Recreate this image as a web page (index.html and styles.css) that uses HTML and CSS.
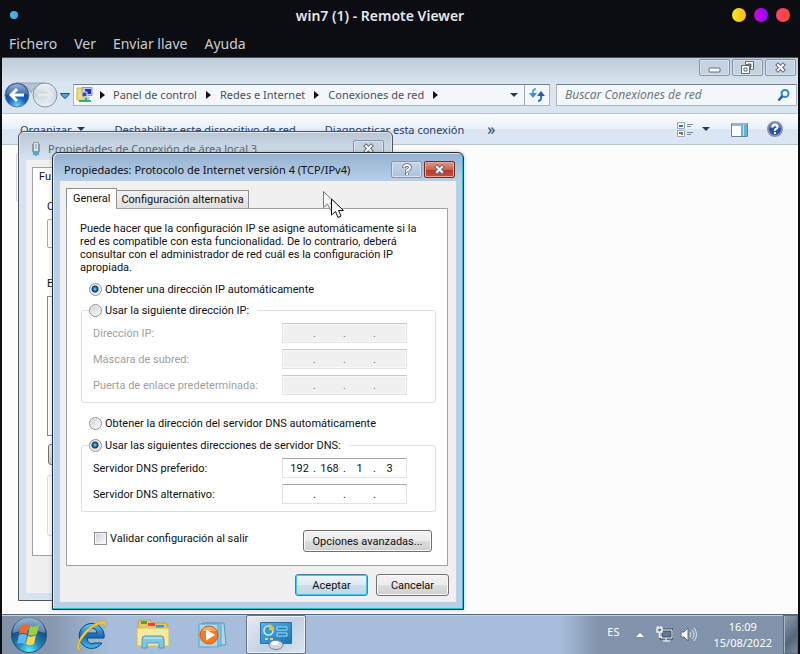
FILE: index.html
```html
<!DOCTYPE html>
<html lang="es">
<head>
<meta charset="utf-8">
<title>win7 (1) - Remote Viewer</title>
<link rel="stylesheet" href="styles.css">
</head>
<body>
<header class="viewer-title">
  <span class="dot dot-blue"></span>
  <h1>win7 (1) - Remote Viewer</h1>
  <div class="viewer-controls">
    <button class="dot dot-yellow" aria-label="Minimizar"></button>
    <button class="dot dot-purple" aria-label="Maximizar"></button>
    <button class="dot dot-red" aria-label="Cerrar"></button>
  </div>
</header>
<nav class="viewer-menu">
  <button>Fichero</button><button>Ver</button><button>Enviar llave</button><button>Ayuda</button>
</nav>

<main class="desktop">
  <section class="explorer">
    <div class="caption">
      <button aria-label="Minimizar"><svg width="13" height="13" viewBox="0 0 13 13"><rect x="1" y="7" width="11" height="4" rx="1" fill="#fff" stroke="#666b78"/></svg></button>
      <button aria-label="Restaurar"><svg width="13" height="13" viewBox="0 0 13 13" fill="none" stroke="#666b78"><path d="M4.500 .5h8v8h-3v-5h-5z" fill="#fff"/><path d="M.5 4.500h8v8h-8z" fill="#fff"/><path d="M3 7h3v3H3zM7 3h3v3"/></svg></button>
      <button aria-label="Cerrar"><svg width="13" height="13" viewBox="0 0 13 13"><path class="x-outline" d="M4 4l5 5M9 4l-5 5"/><path class="x-fill" d="M4 4l5 5M9 4l-5 5"/></svg></button>
    </div>
    <div class="address-row">
      <button class="plain nav-buttons" aria-label="Atrás y adelante">
        <svg width="66" height="28" viewBox="0 0 66 28">
          <defs>
            <radialGradient id="back" cx=".5" cy=".95" r=".8"><stop offset="0" stop-color="#6bdcff"/><stop offset=".45" stop-color="#1764bd"/><stop offset="1" stop-color="#163a83"/></radialGradient>
            <linearGradient id="backTop" x2="0" y2="1"><stop stop-color="#c6d9f2"/><stop offset="1" stop-color="#3c70bb"/></linearGradient>
            <linearGradient id="fwd" x2="0" y2="1"><stop stop-color="#eff3f7"/><stop offset=".5" stop-color="#cbd5df"/><stop offset="1" stop-color="#edf3f8"/></linearGradient>
          </defs>
          <path d="M13 2h28q-12 3-14 10Q25 4 13 2z" fill="#b6c3d0" stroke="#95a4b5"/>
          <circle cx="13" cy="14" r="12" fill="url(#back)" stroke="#62799a"/>
          <path d="M2 14a11 11 0 0 1 22 0Q13 10 2 14z" fill="url(#backTop)" opacity=".75"/>
          <path d="M13 8l-6 6 6 6M8 14h12" fill="none" stroke="#fff" stroke-width="3"/>
          <circle cx="41" cy="14" r="12" fill="url(#fwd)" stroke="#8492a3"/>
          <path d="M42 8l6 6-6 6M34 14h12" fill="none" stroke="#e4eaf0" stroke-width="3"/>
          <path d="M56.500 12.500h9l-2 3-2.500 2-2.500-2z" fill="#4aa8d8" stroke="#264d82"/>
        </svg>
      </button>
      <div class="address">
        <svg width="18" height="18" viewBox="0 0 18 18"><path d="M1 2h7v12H1z" fill="#f4dd75" stroke="#d2b64c"/><path d="M6 1.500h10v8H6z" fill="#c2cbe1" stroke="#8a96b5"/><path d="M9 3h6v5H9z" fill="#1a35bd"/><path d="M6 6h5v5H6z" fill="#2848cd" stroke="#dae2f4"/><path d="M8 10l6 1-1 3H7z" fill="#c0c8d8"/><path d="M9 12v2H3v2h12v-2h-4v-2z" fill="#2bb574"/></svg>
        <i class="crumb-arrow"></i><a href="#">Panel de control</a>
        <i class="crumb-arrow"></i><a href="#">Redes e Internet</a>
        <i class="crumb-arrow"></i><a href="#">Conexiones de red</a>
        <i class="crumb-arrow"></i>
        <button class="plain drop" aria-label="Historial"><i class="down"></i></button>
        <button class="plain refresh" aria-label="Actualizar"><svg width="16" height="16" viewBox="0 0 16 16" fill="none" stroke="#2d72bf" stroke-width="2"><path d="M7 2Q3 2 4 8" stroke="#4fa8df"/><path d="M0 6h8l-4 5z" fill="#3c94d6" stroke="none"/><path d="M9 14q4 0 3-6"/><path d="M8 9h8l-4-5z" fill="#245fae" stroke="none"/></svg></button>
      </div>
      <label class="search">
        <input type="search" placeholder="Buscar Conexiones de red" aria-label="Buscar">
        <svg width="14" height="14" viewBox="0 0 14 14" fill="none"><circle cx="8" cy="5.500" r="3.500" stroke="#3284cd" stroke-width="2"/><path d="M5.500 8L1.500 12.500" stroke="#2857a0" stroke-width="2.500"/></svg>
      </label>
    </div>
    <div class="toolbar">
      <button class="plain">Organizar <i class="down"></i></button>
      <button class="plain">Deshabilitar este dispositivo de red</button>
      <button class="plain">Diagnosticar esta conexión</button>
      <button class="plain more">»</button>
      <span class="spacer"></span>
      <button class="plain view" aria-label="Cambiar vista"><svg width="17" height="17" viewBox="0 0 17 17"><path d="M1.500 1.500h7v6h-7zM1.500 9.500h7v6h-7z" fill="#fff" stroke="#94a8bb"/><path d="M3 4h4v2H3z" fill="#2b7b99"/><path d="M3 11h2v2H3z" fill="#d4463c"/><path d="M5 11h2v3H5z" fill="#45a34b"/><path d="M11 3.500h6M11 5.500h4M11 11.500h6M11 13.500h4" stroke="#7c8c9e"/></svg><i class="down"></i></button>
      <button class="plain pane" aria-label="Panel de vista previa"><svg width="17" height="15" viewBox="0 0 17 15"><path d="M.5 1.500h16v13H.5z" fill="#fff" stroke="#65819b"/><path d="M1 1h15v3H1z" fill="#9bb4c8"/><path d="M10 3h6v11h-6z" fill="#67b3d1"/><path d="M12 3h1v11h-1z" fill="#b9e3f1"/></svg></button>
      <button class="plain help" aria-label="Ayuda"><svg width="16" height="16" viewBox="0 0 16 16"><circle cx="8" cy="8" r="7" fill="#2b4fae" stroke="#8b93a3" stroke-width="2"/><path d="M3 7a5 5 0 0 1 10 0q-5-2-10 0" fill="#6e91df"/><path d="M5.500 6.500q0-3 2.500-3t2.500 2.500q0 1.500-1.500 2T8 10M8 11v2" fill="none" stroke="#fff" stroke-width="2"/></svg></button>
    </div>
    <div class="files"><div class="file-tile"></div></div>
  </section>

  <section class="window back-window">
    <div class="window-title">
      <svg width="10" height="16" viewBox="0 0 10 16"><path d="M2.500 1.500h5v9h-5z" fill="#dbe3ec" stroke="#8c99a8"/><path d="M5 3v5" stroke="#8c99a8"/><path d="M1.500 3v8h7V3" fill="none" stroke="#8c99a8"/><path d="M3 11v3M5 11v4M7 11v3" fill="none" stroke="#319cc1" stroke-width="1.500"/></svg>
      <h2>Propiedades de Conexión de área local 3</h2>
      <button aria-label="Cerrar"><svg width="13" height="13" viewBox="0 0 13 13"><path class="x-outline" d="M4 4l5 5M9 4l-5 5"/><path class="x-fill" d="M4 4l5 5M9 4l-5 5"/></svg></button>
    </div>
    <div class="client">
      <div class="back-page">
        <p class="back-tab">Fu</p>
        <p class="back-label">C</p>
        <div class="back-box"></div>
        <p class="back-label second">E</p>
        <div class="back-list"></div>
        <button class="back-button" aria-label="Instalar"></button>
        <div class="back-group"></div>
      </div>
    </div>
  </section>

  <section class="window front-window">
    <div class="window-title">
      <h2>Propiedades: Protocolo de Internet versión 4 (TCP/IPv4)</h2>
      <button class="help-button" aria-label="Ayuda"><svg width="12" height="13" viewBox="0 0 12 13" fill="none"><path d="M3 5q0-3 3-3t3 2.500q0 1.500-2 2.500T6 9M6 10v2" stroke="#5d6675" stroke-width="3.500"/><path d="M3 4.500q0-2.500 3-2.500t3 2.500q0 1.500-2 2.500T6 8.500M6 10v2" stroke="#fff" stroke-width="2"/></svg></button>
      <button class="close-button" aria-label="Cerrar"><svg width="13" height="13" viewBox="0 0 13 13"><path class="x-outline" d="M4 4l5 5M9 4l-5 5"/><path class="x-fill" d="M4 4l5 5M9 4l-5 5"/></svg></button>
    </div>
    <form class="client">
      <div class="tabs"><button type="button" class="tab active">General</button><button type="button" class="tab">Configuración alternativa</button></div>
      <div class="page">
        <p class="intro">Puede hacer que la configuración IP se asigne automáticamente si la<br>red es compatible con esta funcionalidad. De lo contrario, deberá<br>consultar con el administrador de red cuál es la configuración IP<br>apropiada.</p>
        <label class="choice loose"><input type="radio" name="ip" checked>Obtener una dirección IP automáticamente</label>
        <fieldset>
          <legend><label class="choice"><input type="radio" name="ip">Usar la siguiente dirección IP:</label></legend>
          <div class="field disabled"><label for="ip1">Dirección IP:</label><div class="ip"><input id="ip1" disabled>.<input disabled aria-label="Octeto 2">.<input disabled aria-label="Octeto 3">.<input disabled aria-label="Octeto 4"></div></div>
          <div class="field disabled"><label for="mask1">Máscara de subred:</label><div class="ip"><input id="mask1" disabled>.<input disabled aria-label="Octeto 2">.<input disabled aria-label="Octeto 3">.<input disabled aria-label="Octeto 4"></div></div>
          <div class="field disabled"><label for="gate1">Puerta de enlace predeterminada:</label><div class="ip"><input id="gate1" disabled>.<input disabled aria-label="Octeto 2">.<input disabled aria-label="Octeto 3">.<input disabled aria-label="Octeto 4"></div></div>
        </fieldset>
        <label class="choice loose dns"><input type="radio" name="dns" disabled>Obtener la dirección del servidor DNS automáticamente</label>
        <fieldset>
          <legend><label class="choice"><input type="radio" name="dns" checked>Usar las siguientes direcciones de servidor DNS:</label></legend>
          <div class="field"><label for="dns1">Servidor DNS preferido:</label><div class="ip"><input id="dns1" value="192">.<input value="168" aria-label="Octeto 2">.<input value="1" aria-label="Octeto 3">.<input value="3" aria-label="Octeto 4"></div></div>
          <div class="field"><label for="dns2">Servidor DNS alternativo:</label><div class="ip"><input id="dns2">.<input aria-label="Octeto 2">.<input aria-label="Octeto 3">.<input aria-label="Octeto 4"></div></div>
        </fieldset>
        <div class="page-end">
          <label class="choice"><input type="checkbox">Validar configuración al salir</label>
          <button type="button" class="push wide">Opciones avanzadas...</button>
        </div>
      </div>
      <div class="actions"><button type="button" class="push default">Aceptar</button><button type="button" class="push">Cancelar</button></div>
    </form>
  </section>

  <svg class="cursor" width="22" height="30" viewBox="0 0 22 30"><path d="M1.500 1.500v16l4-3.500 3 6 3-1-3-6h5z" fill="#f5f5f5" stroke="#777b88"/><path d="M9.500 9v16l4-3.500 2.500 6 3-1.500-2.500-5.500h5z" fill="#fff" stroke="#111"/></svg>

  <footer class="taskbar">
    <button class="plain task start" aria-label="Inicio">
      <svg width="38" height="38" viewBox="0 0 38 38"><defs><radialGradient id="orb" cx=".5" cy=".95" r=".9"><stop stop-color="#59efff"/><stop offset=".35" stop-color="#2088b9"/><stop offset=".75" stop-color="#194b82"/><stop offset="1" stop-color="#6992b5"/></radialGradient></defs><circle cx="19" cy="19" r="17.500" fill="url(#orb)" stroke="#27537e"/><path d="M3 17A16 16 0 0 1 35 17Q19 11 3 17" fill="#bad5e6" opacity=".45"/><path d="M11 10q4-3 8-1l-2 9q-4-2-8 0z" fill="#ee6932"/><path d="M20 10q5 2 9-1l-2 9q-4 3-9 1z" fill="#9bce43"/><path d="M9 19q4-2 8 0l-2 9q-4-2-8 0z" fill="#62b7ee"/><path d="M18 20q4 2 8-1l-2 9q-4 2-8 0z" fill="#fdd64a"/></svg>
    </button>
    <button class="plain task ie" aria-label="Internet Explorer">
      <svg width="34" height="34" viewBox="0 0 34 34"><defs><linearGradient id="ie" x2="0" y2="1"><stop stop-color="#69cdf3"/><stop offset=".5" stop-color="#1568b7"/><stop offset="1" stop-color="#42bfea"/></linearGradient></defs><path d="M30 20A12.500 12.500 0 1 0 28 25H21q-7 3-8-5zM13 15q1-5 5-5t5 5z" fill="url(#ie)" fill-rule="evenodd" stroke="#0b457f"/><path d="M8 31Q3 34 3 28 5 17 17 8 31-1 32 5q0 2-2 5 1-5-3-4-9 2-15 10-7 8-7 12 0 3 3 3" fill="#f5c93a" stroke="#c99118" stroke-width=".5"/></svg>
    </button>
    <button class="plain task folder" aria-label="Explorador de Windows">
      <svg width="34" height="32" viewBox="0 0 34 32"><path d="M2 4l2-3h10l2 3h14l2 4v18H2z" fill="#e4c867" stroke="#bf9e40"/><path d="M5 2h6v3H5z" fill="#4ba349"/><path d="M12 4h7v3h-7z" fill="#d94e3e"/><path d="M20 6h8v3h-8z" fill="#3b9ad5"/><path d="M1 9h32v18H1z" fill="#f8e99c" stroke="#d9bb5b"/><path d="M6 29V20q0-3 3-3h16q3 0 3 3v9h-5v-5H11v5z" fill="#80c6e5" stroke="#4d9abf"/><path d="M8 19h18" stroke="#d6f2fb"/></svg>
    </button>
    <button class="plain task wmp" aria-label="Reproductor de Windows Media">
      <svg width="30" height="28" viewBox="0 0 30 28"><path d="M8 2h18l2 22H10z" fill="#add8ec" stroke="#5799bd"/><path d="M4 2h19v23H4z" fill="#91c5df" stroke="#5b9fc5"/><path d="M1 3h19v23H1z" fill="#a8d7ec" stroke="#5b9fc5"/><circle cx="11" cy="14" r="9" fill="#f27c23" stroke="#dc5516"/><path d="M4 10a8 8 0 0 1 14 0z" fill="#ffad60"/><path d="M8 8.500v11l9-5.500z" fill="#fff"/></svg>
    </button>
    <button class="plain task active-task" aria-label="Panel de control">
      <svg width="34" height="30" viewBox="0 0 34 30"><defs><linearGradient id="cp" x2="1" y2="1"><stop stop-color="#55b5e5"/><stop offset="1" stop-color="#1873b4"/></linearGradient></defs><path d="M1.500 2.500h31v21h-31z" fill="url(#cp)" stroke="#2872a1"/><circle cx="9.500" cy="10.500" r="4.500" fill="#329bd5" stroke="#c8ecfc" stroke-width="1.500"/><path d="M10 10V4a6 6 0 0 1 5 7z" fill="#f9b72f"/><path d="M18 7h10v3H18zM18 13h10v3H18z" fill="#237fba" stroke="#a5ddf5"/><path d="M6 18h3v2H6zM11 18h3v2h-3z" fill="#ffc44d"/><ellipse cx="17" cy="25" rx="7" ry="4.500" fill="#d2d4d7" stroke="#7b8790"/><ellipse cx="16" cy="23" rx="4" ry="2" fill="#f7f7f7"/></svg>
    </button>
    <span class="spacer"></span>
    <div class="tray">
      <span class="lang">ES</span>
      <i class="up"></i>
      <svg width="17" height="17" viewBox="0 0 17 17" fill="none"><path d="M5 4h11v8H5z" fill="#637894" stroke="#3d4b5e" stroke-width="3"/><path d="M5 4h11v8H5zM10 12v3M7 15h7" stroke="#fff"/><path d="M1 2h5v4H1zM3.500 6v5H6M2 0v2M5 0v2" stroke="#eee" stroke-width="1.500"/></svg>
      <svg width="17" height="15" viewBox="0 0 17 15" fill="none"><path d="M1 5h3l4-4v13l-4-4H1z" fill="#fff" stroke="#606c7c"/><path d="M10 5q2 2.500 0 5M12 3q4 4.500 0 9M14 1q5 6.500 0 13" stroke="#e4e9ef"/></svg>
      <div class="clock"><span>16:09</span><span>15/08/2022</span></div>
    </div>
    <button class="show-desktop" aria-label="Mostrar escritorio"></button>
  </footer>
</main>
</body>
</html>
```

FILE: styles.css
```css
* { box-sizing: border-box; }
body {
  margin: 0;
  min-height: 100vh;
  display: flex;
  flex-direction: column;
  background: #0c0d13;
  font-family: "Noto Sans", "Open Sans", sans-serif;
  font-size: 11px;
}
h1, h2, p { margin: 0; font-weight: 400; }
button, input { font: inherit; color: inherit; margin: 0; }
button { padding: 0; }
svg { display: block; flex: none; }
.plain { border: 0; background: none; display: flex; align-items: center; }
.spacer { flex: 1; }

/* Viewer frame */
.viewer-title {
  height: 30px;
  padding: 0 10px;
  display: grid;
  grid-template-columns: 80px 1fr 120px;
  align-items: center;
  color: #e3e6eb;
}
.viewer-title h1 { font-size: 14px; font-weight: 600; text-align: center; }
.viewer-controls { display: flex; gap: 8px; justify-content: flex-end; }
.dot { border: 0; border-radius: 50%; width: 14px; height: 14px; }
.dot-blue { width: 8px; height: 8px; background: linear-gradient(90deg, #39c4d8, #529cf5); }
.dot-yellow { background: linear-gradient(90deg, #f6eb16, #ffb42a); }
.dot-purple { background: linear-gradient(90deg, #d400d8, #8b0cff); }
.dot-red { background: linear-gradient(90deg, #ff3f73, #ff4d28); }
.viewer-menu { height: 27px; padding: 0 9px; display: flex; gap: 17px; align-items: center; font-size: 14px; color: #c9ccd1; }
.viewer-menu button { border: 0; background: none; }

/* Remote desktop */
.desktop {
  position: relative;
  flex: 1;
  margin: 0 2px;
  border-top: 1px solid #4d5660;
  display: flex;
  flex-direction: column;
}
.explorer { flex: 1; display: flex; flex-direction: column; background: linear-gradient(#becbd8, #d9e5f1 26px); background-color: #d9e5f1; }
.caption { height: 20px; padding: 1px 2px 0 0; display: flex; justify-content: flex-end; align-items: flex-start; gap: 2px; }
.caption button, .window-title button {
  width: 31px;
  height: 17px;
  border: 1px solid #8794aa;
  border-radius: 2px;
  background: #c5d2e0;
  box-shadow: inset 0 0 0 1px #d8e2ed;
  display: flex;
  align-items: center;
  justify-content: center;
}
.x-outline { stroke: #666b78; stroke-width: 4; stroke-linecap: square; fill: none; }
.x-fill { stroke: #fff; stroke-width: 2; stroke-linecap: square; fill: none; }
.address-row { height: 35px; padding: 0 1px 2px 2px; display: flex; align-items: center; }
.nav-buttons { width: 69px; }
.address, .search { height: 22px; border: 1px solid #a9b4c0; border-top-color: #747f8c; background: #f4f8fc; display: flex; align-items: center; }
.address { flex: 1; margin-right: 6px; padding-left: 2px; color: #4c5159; min-width: 0; }
.address a { color: inherit; text-decoration: none; white-space: nowrap; }
.crumb-arrow { border: 4px solid transparent; border-left: 5px solid #111; border-right: 0; margin: 0 9px; }
.address svg + .crumb-arrow { margin: 0 8px 0 6px; }
.down { border: 4px solid transparent; border-top: 4px solid #26395c; border-bottom: 0; }
.drop { margin-left: auto; padding: 0 6px; }
.refresh { height: 20px; padding: 0 4px; border-left: 1px solid #9da7b2; }
.search { width: 241px; min-width: 0; padding: 0 5px 0 8px; font-size: 12px; }
.search input { flex: 1; min-width: 0; padding: 0; border: 0; outline: 0; background: none; font-style: italic; }
.search input::placeholder { color: #72777e; opacity: 1; }
.toolbar {
  height: 32px;
  padding: 0 15px 0 18px;
  display: flex;
  align-items: center;
  border-top: 1px solid #b6c4d4;
  border-bottom: 1px solid #b4c2d4;
  background: linear-gradient(#fbfdff, #e8f0fa 50%, #dbe5f4 51%, #dbe6f4);
  color: #27415f;
  white-space: nowrap;
}
.toolbar button { margin-right: 29px; gap: 6px; }
.toolbar button.more { margin: 0 0 0 -6px; font-size: 16px; }
.toolbar button.view { margin-right: 21px; gap: 9px; }
.toolbar button.pane { margin-right: 19px; }
.toolbar button.help { margin-right: 0; }
.files { flex: 1; background: #fcfcfc; padding-top: 7px; }
.file-tile { width: 60px; height: 50px; margin-left: 14px; border: 1px solid #d3d6da; border-radius: 3px; }

/* Dialog windows */
.window { position: absolute; border: 1px solid #4f555d; border-radius: 6px 6px 0 0; display: flex; flex-direction: column; color: #111; }
.window-title { height: 28px; display: flex; align-items: center; }
.window-title h2 { flex: 1; font-size: 11px; white-space: nowrap; overflow: hidden; }
.client { flex: 1; background: #f0f0f0; display: flex; flex-direction: column; font-family: Roboto, "Liberation Sans", sans-serif; }
.back-window { left: 16px; top: 73px; width: 375px; height: 470px; padding: 0 7px 7px; background: linear-gradient(#b9c7d5, #d7e3f0 28px); box-shadow: inset 0 0 0 1px #dde7f1; overflow: hidden; }
.back-window .window-title { padding: 5px 1px 0 5px; color: #5a6471; gap: 7px; }
.back-window .client { padding: 7px 6px 37px; }
.back-page { flex: 1; background: #fff; border: 1px solid #9da2ab; padding: 0 14px; }
.back-tab { margin-left: -8px; line-height: 18px; }
.back-label { padding-top: 13px; line-height: 16px; }
.back-box { height: 29px; margin-top: 4px; border: 1px solid #a7abb0; border-radius: 2px; }
.back-label.second { padding-top: 28px; }
.back-list { height: 140px; margin-top: 4px; border: 1px solid #858b92; }
.back-button { width: 100px; height: 21px; margin: 8px 0 10px 1px; border: 1px solid #707070; border-radius: 3px; background: linear-gradient(#f2f2f2, #cfcfcf); }
.back-group { height: 61px; border: 1px solid #d5dfe8; border-radius: 3px; }

.front-window {
  left: 50px;
  top: 94px;
  width: 412px;
  padding: 0 7px 7px;
  border-color: #252d36;
  background: linear-gradient(#94b2d1, #b8cfe8 28px);
  box-shadow: inset -1px -1px #25bdd2, inset 1px 1px #dce9f5, 0 0 4px #8d929880;
}
.front-window .window-title { padding: 5px 1px 0 4px; gap: 2px; }
.front-window .help-button { background: linear-gradient(#c4d6e9, #a9c3df); }
.front-window .close-button { border-color: #662e30; box-shadow: inset 0 0 0 1px #e6a79c; background: linear-gradient(#dc9a8d, #cb6450 50%, #b93420 51%, #ca513d); }
.front-window .client { padding: 7px 8px 6px 6px; }
.tabs { display: flex; align-items: flex-end; height: 20px; }
.tab { height: 18px; padding: 0 4px; border: 1px solid #8c9097; border-bottom: 0; background: linear-gradient(#f3f3f3, #dedede); white-space: nowrap; }
.tab.active { height: 21px; margin-bottom: -1px; padding: 0 6px 2px; background: #fff; z-index: 1; }
.tab + .tab { border-left: 0; }
.page { border: 1px solid #9da2ab; background: #fff; padding: 13px 11px 13px 14px; }
.intro { line-height: 13px; margin: 0 -8px 0 -1px; white-space: nowrap; }
.choice { display: flex; align-items: center; gap: 3px; height: 16px; white-space: nowrap; }
.loose { margin: 7px 0 5px 8px; }
.loose.dns { margin: 12px 0 6px 8px; }
.choice input { appearance: none; flex: none; width: 13px; height: 13px; border: 1px solid #8d9298; background: linear-gradient(135deg, #c9ccd0, #fff); box-shadow: inset 0 0 0 1px #f4f4f4; }
.choice input[type="radio"] { border-radius: 50%; }
.choice input[type="radio"]:checked { background: radial-gradient(circle at 5px 5px, #8fdcf3 0, #1c6b97 2px, #12385b 3px, #d8e2e8 4px); }
fieldset { margin: 0; min-width: 0; padding: 5px 28px 7px 11px; border: 1px solid #d7e1ea; border-radius: 3px; }
legend { padding: 0 8px 0 0; margin-left: -4px; }
.field { display: flex; justify-content: space-between; align-items: center; height: 20px; margin-bottom: 6px; white-space: nowrap; }
.field:last-child { margin-bottom: 0; }
.field.disabled { color: #a1a1a1; }
.ip { width: 125px; height: 20px; padding: 0 3px; display: flex; align-items: center; border: 1px solid #dfe3ea; border-top-color: #a5a8b0; background: #fff; color: #111; }
.ip input { flex: 1; min-width: 0; width: 20px; height: 16px; padding: 0; border: 0; outline: 0; background: none; text-align: center; }
.disabled .ip { background: #f0f0f0; border-top-color: #c6c7ca; box-shadow: inset 0 0 0 1px #f8f8f8; color: #777; }
.page-end { display: flex; justify-content: space-between; align-items: flex-start; margin: 18px 4px 0 13px; }
.push { height: 22px; width: 73px; border: 1px solid #707070; border-radius: 3px; background: linear-gradient(#f3f3f3, #ebebeb 49%, #dddddd 50%, #cfcfcf); box-shadow: inset 0 0 0 1px #f9f9f9; }
.push.wide { width: 129px; }
.push.default { border-color: #308bb1; background: linear-gradient(#edf6fa, #dceaf1 49%, #ccdfe8 50%, #bfd8e3); box-shadow: inset 0 0 0 1px #3cc8f2; }
.actions { display: flex; justify-content: flex-end; gap: 8px; padding-top: 8px; margin-right: -1px; }
.cursor { position: absolute; left: 320px; top: 132px; }

/* Taskbar */
.taskbar { height: 40px; display: flex; align-items: center; border-top: 1px solid #596779; box-shadow: inset 0 1px #c1d0e1; background: linear-gradient(90deg, #8191a7, #8798af 50px, #a6bedb 108px, #a6bedb calc(100% - 238px), #8194ac calc(100% - 200px), #8093aa); }
.task { height: 39px; justify-content: center; width: 62px; }
.start { width: 54px; }
.ie { width: 70px; }
.folder { width: 54px; }
.wmp { width: 66px; }
.active-task { width: 60px; border: 1px solid #667587; border-radius: 2px; background: linear-gradient(135deg, #e5ebf2, #c2d0e2 55%, #dce5ef); box-shadow: inset 0 0 0 1px #edf2f8; }
.tray { display: flex; align-items: center; gap: 7px; color: #fff; }
.lang { margin: 0 10px 6px 0; }
.up { border: 4px solid transparent; border-bottom: 4px solid #fff; border-top: 0; margin-right: 5px; }
.clock { display: flex; flex-direction: column; align-items: center; line-height: 16px; margin: 0 11px 0 9px; }
.show-desktop { width: 15px; height: 39px; border: 1px solid #5c6979; background: linear-gradient(135deg, #8e9caf, #566579 60%, #7c8b9e); box-shadow: inset 1px 0 #aab7c6; }
```
